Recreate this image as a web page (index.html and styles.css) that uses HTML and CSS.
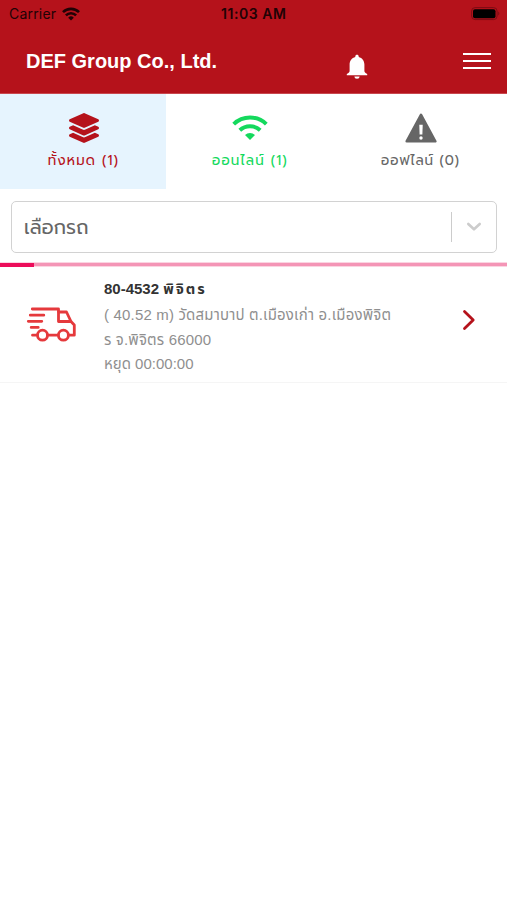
FILE: index.html
```html
<!DOCTYPE html>
<html lang="th">
<head>
    <meta charset="UTF-8">
    <meta name="viewport" content="width=device-width, initial-scale=1.0">
    <title>DEF Group Co., Ltd.</title>
    <link rel="stylesheet" href="styles.css">
</head>
<body>
    <header class="header">
        <div class="status-bar">
            <div class="carrier">
                <span class="carrier-name">Carrier</span>
                <svg width="18" height="14" viewBox="0 0 18 14" fill="none" stroke="#210205" stroke-width="2.6">
                    <path d="M1 5.2a11.3 11.3 0 0 1 16 0"/>
                    <path d="M3.9 8.3a7.2 7.2 0 0 1 10.2 0"/>
                    <path d="M9 13.6L6.2 10.7a4 4 0 0 1 5.6 0z" fill="#210205" stroke="none"/>
                </svg>
            </div>
            <span class="time">11:03 AM</span>
            <svg class="battery" width="29" height="14" viewBox="0 0 29 14">
                <rect x="0.6" y="0.6" width="25.5" height="12" rx="3.5" fill="none" stroke="#7d0c14" stroke-width="1"/>
                <rect x="2" y="2.2" width="22.5" height="9" rx="2" fill="#000"/>
                <path d="M27.3 4.6v4c1.4-.7 1.4-3.3 0-4z" fill="#7d0c14"/>
            </svg>
        </div>
        <div class="navbar">
            <h1 class="title">DEF Group Co., Ltd.</h1>
            <svg class="bell" width="22" height="26" viewBox="0 0 22 26" fill="#fff">
                <path d="M11 .7c1 0 1.700.7 1.700 1.600v.6c3.500.9 5.700 3.800 5.700 7.500v6.500c0 1 .8 2.100 2.800 3.100v1.300H.8V20c2-1 2.800-2.100 2.800-3.100v-6.500c0-3.700 2.200-6.600 5.700-7.500v-.6C9.300 1.400 10 .7 11 .7z"/>
                <path d="M8.400 22.500h5.200a2.600 2.200 0 0 1-5.200 0z"/>
            </svg>
            <div class="menu">
                <span></span>
                <span></span>
                <span></span>
            </div>
        </div>
    </header>

    <nav class="tabs">
        <div class="tab tab-all">
            <svg width="30" height="30" viewBox="0 0 512 512" fill="#b5121b">
                <path d="M12.410 148.020l232.940 105.670c6.800 3.090 14.490 3.090 21.290 0l232.940-105.670c16.550-7.510 16.550-32.520 0-40.030L266.650 2.310a25.607 25.607 0 0 0-21.290 0L12.410 107.980c-16.550 7.510-16.550 32.530 0 40.040zm487.180 88.280l-58.090-26.330-161.640 73.270c-7.560 3.430-15.590 5.170-23.860 5.170s-16.290-1.740-23.860-5.170L70.510 209.970l-58.100 26.330c-16.550 7.500-16.550 32.500 0 40l232.940 105.590c6.800 3.080 14.490 3.080 21.290 0L499.590 276.300c16.550-7.500 16.550-32.500 0-40zm0 127.800l-57.870-26.230-161.860 73.370c-7.560 3.430-15.590 5.170-23.860 5.170s-16.290-1.740-23.860-5.170L70.290 337.870 12.410 364.100c-16.550 7.500-16.550 32.500 0 40l232.940 105.590c6.800 3.080 14.490 3.080 21.290 0L499.590 404.100c16.550-7.500 16.550-32.500 0-40z"/>
            </svg>
            <span>ทั้งหมด (1)</span>
        </div>
        <div class="tab tab-online">
            <svg width="36" height="30" viewBox="0 0 36 30" fill="none" stroke="#14d95d" stroke-width="4">
                <path d="M1.700 11.100a23.500 23.500 0 0 1 32.600 0"/>
                <path d="M7.800 17.200a15 15 0 0 1 20.400 0"/>
                <path d="M18 26.900l-5-5a7.400 7.400 0 0 1 10 0z" fill="#14d95d" stroke="none"/>
            </svg>
            <span>ออนไลน์ (1)</span>
        </div>
        <div class="tab tab-offline">
            <svg width="32" height="30" viewBox="0 0 32 30">
                <path d="M16 1.800L30.300 28.300H1.700z" fill="#666" stroke="#666" stroke-width="2.600" stroke-linejoin="round"/>
                <path d="M14.300 11.800h3.400l-.3 9.800h-2.800z" fill="#fff"/>
                <circle cx="16" cy="25" r="1.700" fill="#fff"/>
            </svg>
            <span>ออฟไลน์ (0)</span>
        </div>
    </nav>

    <div class="select">
        <span class="placeholder">เลือกรถ</span>
        <span class="separator"></span>
        <svg class="arrow" width="16" height="10" viewBox="0 0 16 10" fill="none" stroke="#ccc" stroke-width="2.600" stroke-linecap="round" stroke-linejoin="round">
            <path d="M2.300 2L8 7.300 13.700 2"/>
        </svg>
    </div>

    <div class="progress"><div class="progress-bar"></div></div>

    <div class="car">
        <svg class="truck" width="50" height="36" viewBox="0 0 50 36" fill="none" stroke="#e5393c" stroke-width="2.800" stroke-linecap="round" stroke-linejoin="round">
            <path d="M6.300 2h26.200v2.500"/>
            <path d="M4.300 8.200h13.500M2.300 14.300h13.500M5.200 20.400h7"/>
            <path d="M6.500 28.200h4.500M21.800 28.200h10.400M42.600 28.200h5.700V18l-3.300-3.500-4.500-9.500H32.500v9.500H45"/>
            <circle cx="16.500" cy="28.200" r="5"/>
            <circle cx="37.400" cy="28.200" r="5"/>
        </svg>
        <div class="car-info">
            <div class="car-name">80-4532 <span>พิจิตร</span></div>
            <div class="car-text line-1">( 40.52 m) วัดสมาบาป ต.เมืองเก่า อ.เมืองพิจิต</div>
            <div class="car-text line-2">ร จ.พิจิตร 66000</div>
            <div class="car-text line-3">หยุด 00:00:00</div>
        </div>
        <svg class="next" width="14" height="22" viewBox="0 0 14 22" fill="none" stroke="#b5121b" stroke-width="2.800" stroke-linecap="round" stroke-linejoin="round">
            <path d="M2.500 2.500L11.200 11 2.500 19.500"/>
        </svg>
    </div>
</body>
</html>
```
FILE: styles.css
```css
* {
    box-sizing: border-box;
}
body {
    margin: 0;
    background: #fff;
    font-family: "Prompt", "Noto Sans Thai", "Noto Sans", sans-serif;
}
svg {
    display: block;
    flex: none;
}
.header {
    height: 94px;
    background: #b5121b;
    border-bottom: 1px solid #c9474e;
}
.status-bar {
    display: flex;
    align-items: center;
    justify-content: space-between;
    height: 27px;
    padding: 0 7px 0 9px;
    font-family: Inter, sans-serif;
    color: #210205;
}
.carrier {
    display: flex;
    align-items: center;
    gap: 6px;
    width: 212px;
    font-size: 14px;
    letter-spacing: 0.2px;
}
.time {
    flex: 1;
    font-size: 14px;
    font-weight: 600;
    letter-spacing: 0.55px;
}
.navbar {
    display: flex;
    align-items: center;
    height: 67px;
    padding: 0 16px 0 26px;
}
.title {
    flex: 1;
    margin: 2px 0 0;
    font-family: "Liberation Sans", sans-serif;
    font-size: 20px;
    font-weight: bold;
    color: #fff;
}
.bell {
    margin: 13px 95px 0 0;
}
.menu {
    display: flex;
    flex-direction: column;
    gap: 5px;
    width: 28px;
}
.menu span {
    height: 2px;
    background: #fff;
}
.tabs {
    display: flex;
    height: 95px;
}
.tab {
    display: flex;
    flex-direction: column;
    align-items: center;
    padding-top: 19px;
    font-size: 13.5px;
    line-height: 20px;
    letter-spacing: 1.1px;
    white-space: nowrap;
}
.tab span {
    margin-top: 8px;
}
.tab-all {
    width: 166px;
    padding-left: 1px;
    background: #e6f4fe;
    color: #b5121b;
}
.tab-online {
    width: 168px;
    color: #14d95d;
}
.tab-offline {
    width: 173px;
    color: #666;
}
.tab-offline span {
    letter-spacing: 0.8px;
}
.select {
    display: flex;
    align-items: center;
    height: 52px;
    margin: 12px 10px 0 11px;
    padding: 0 14px 0 12px;
    border: 1.5px solid #d2d2d2;
    border-radius: 5px;
}
.placeholder {
    flex: 1;
    font-size: 19.5px;
    color: #666;
}
.separator {
    width: 1px;
    height: 30px;
    margin-right: 14px;
    background: #ccc;
}
.progress {
    height: 5px;
    margin-top: 9px;
    background: #f495b6;
    border-top: 1px solid #fbd5e2;
    border-bottom: 1px solid #fbd5e2;
}
.progress-bar {
    width: 34px;
    height: 4px;
    background: #ec0c5a;
}
.car {
    display: flex;
    height: 116px;
    padding: 9px 31px 0 26px;
    border-bottom: 1px solid #f5f5f5;
}
.truck {
    margin-top: 31px;
}
.car-info {
    flex: 1;
    padding-left: 28px;
    white-space: nowrap;
}
.car-name {
    height: 27px;
    font-family: "Liberation Sans", "Noto Sans Thai", sans-serif;
    font-size: 15px;
    font-weight: bold;
    line-height: 26px;
    color: #333;
}
.car-name span {
    font-size: 14.5px;
    letter-spacing: 2px;
}
.car-text {
    height: 24.5px;
    font-family: "Liberation Sans", "Noto Sans Thai", sans-serif;
    font-size: 15px;
    line-height: 24.5px;
    letter-spacing: 0.18px;
    color: #8f8f8f;
}
.line-3 {
    letter-spacing: 0;
}
.next {
    margin-top: 33px;
}
```
